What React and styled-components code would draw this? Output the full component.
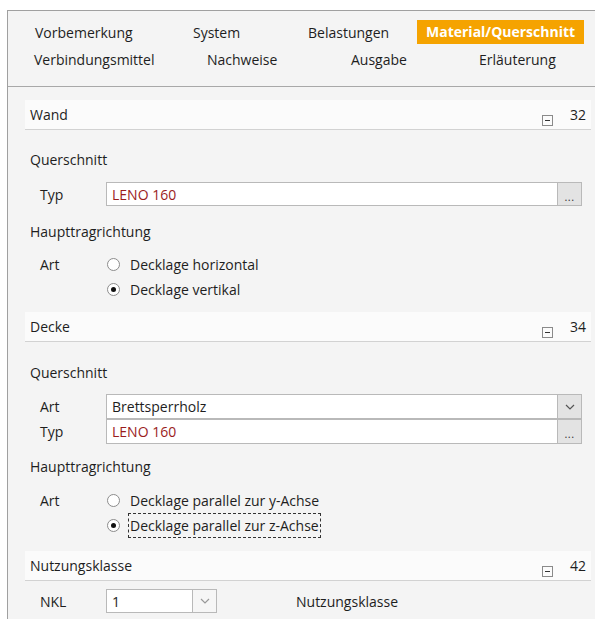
import styled, { createGlobalStyle } from 'styled-components'

const GlobalStyle = createGlobalStyle`
    html, body {
        margin: 0;
        padding: 0;
        background: #ffffff;
    }
    body {
        font-family: "Open Sans", "Noto Sans", sans-serif;
        font-size: 14px;
        color: #1e1e1e;
    }
`

export const Frame = styled.div`
    margin: 10px 0 0 7px;
    min-height: 609px;
    border-left: 1px solid #a0a0a0;
    border-top: 1px solid #a0a0a0;
    background: #f4f4f4;
    box-sizing: border-box;
`

export const TabBar = styled.div`
    height: 76px;
    border-bottom: 1px solid #a8a8a8;
    box-sizing: border-box;
    padding-top: 8px;
`

export const TabRow = styled.div`
    display: flex;
    height: ${p => p.$h}px;
    align-items: center;
    padding-left: ${p => p.$pad}px;
`

export const Tab = styled.span`
    width: ${p => p.$w}px;
    box-sizing: border-box;
    white-space: nowrap;
`

export const ActiveTab = styled.span`
    background: #f5a300;
    color: #ffffff;
    font-weight: 700;
    padding: 3px 9px;
    line-height: 18px;
    margin-left: -2px;
`

export const Body = styled.div`
    padding: 13px 4px 0 17px;
`

export const SectionHead = styled.div`
    display: flex;
    align-items: center;
    height: 30px;
    margin-top: ${p => p.$top || 0}px;
    padding: 0 5px 0 5px;
    background: #fbfbfb;
    border-bottom: 1px solid #d2d2d2;
    box-sizing: border-box;
`

export const HeadTitle = styled.span`
    flex: 1;
`

export const Collapse = styled.span`
    width: 9px;
    height: 9px;
    border: 1px solid #8a8a8a;
    margin: 12px 17px 0 0;
    position: relative;
    &::after {
        content: '';
        position: absolute;
        left: 2px;
        right: 2px;
        top: 4px;
        height: 1px;
        background: #333;
    }
`

export const GroupTitle = styled.div`
    height: 24px;
    line-height: 24px;
    margin-top: ${p => p.$top}px;
    padding-left: 5px;
`

export const FieldRow = styled.div`
    display: flex;
    align-items: center;
    height: ${p => p.$h || 24}px;
    margin-top: ${p => p.$top || 0}px;
`

export const Label = styled.span`
    width: 81px;
    padding-left: 15px;
    box-sizing: border-box;
`

export const InputBox = styled.div`
    display: flex;
    width: ${p => p.$w || 476}px;
    height: 100%;
    border: 1px solid #b9b9b9;
    margin-top: ${p => (p.$joined ? -1 : 0)}px;
    box-sizing: border-box;
    background: #ffffff;
`

export const InputText = styled.span`
    flex: 1;
    padding-left: 5px;
    display: flex;
    align-items: center;
    color: ${p => (p.$red ? '#9a1c1c' : '#1e1e1e')};
`

export const SideButton = styled.span`
    width: 23px;
    border-left: 1px solid #b9b9b9;
    background: ${p => (p.$light ? '#f6f6f6' : '#e3e3e3')};
    display: flex;
    align-items: center;
    justify-content: center;
    color: #333;
`

export const Dots = styled.span`
    font-size: 11px;
    letter-spacing: 0.5px;
    margin-top: 4px;
`

export const Radio = styled.span`
    width: 13px;
    height: 13px;
    border-radius: 50%;
    border: 1px solid #8c8c8c;
    background: #ffffff;
    box-sizing: border-box;
    margin: 0 8px 0 1px;
    display: flex;
    align-items: center;
    justify-content: center;
    &::after {
        content: '';
        width: 5px;
        height: 5px;
        border-radius: 50%;
        background: ${p => (p.$on ? '#111' : 'transparent')};
    }
`

export const RadioText = styled.span`
    padding: 2px 1px;
    border: 1px dashed ${p => (p.$focus ? '#333' : 'transparent')};
`

export const Caption = styled.span`
    margin-left: 79px;
`

const Chevron = ({ color = '#555' }) => (
    <svg width="10" height="6" viewBox="0 0 10 6">
        <path d="M1 1 L5 5 L9 1" fill="none" stroke={color} strokeWidth="1.2" />
    </svg>
)

function Section({ title, num, top }) {
    return (
        <SectionHead $top={top}>
            <HeadTitle>{title}</HeadTitle>
            <Collapse />
            <span>{num}</span>
        </SectionHead>
    )
}

function RadioRow({ label, text, on, focus, top }) {
    return (
        <FieldRow $h={25} $top={top}>
            <Label>{label}</Label>
            <Radio $on={on} />
            <RadioText $focus={focus}>{text}</RadioText>
        </FieldRow>
    )
}

export default function App() {
    return (
        <>
            <GlobalStyle />
            <Frame>
                <TabBar>
                    <TabRow $pad={27} $h={26}>
                        <Tab $w={158}>Vorbemerkung</Tab>
                        <Tab $w={115}>System</Tab>
                        <Tab $w={111}>Belastungen</Tab>
                        <ActiveTab>Material/Querschnitt</ActiveTab>
                    </TabRow>
                    <TabRow $pad={26} $h={28}>
                        <Tab $w={173}>Verbindungsmittel</Tab>
                        <Tab $w={144}>Nachweise</Tab>
                        <Tab $w={128}>Ausgabe</Tab>
                        <Tab>Erläuterung</Tab>
                    </TabRow>
                </TabBar>

                <Body>
                    <Section title="Wand" num="32" />
                    <GroupTitle $top={18}>Querschnitt</GroupTitle>
                    <FieldRow $top={10}>
                        <Label>Typ</Label>
                        <InputBox>
                            <InputText $red>LENO 160</InputText>
                            <SideButton><Dots>...</Dots></SideButton>
                        </InputBox>
                    </FieldRow>
                    <GroupTitle $top={14}>Haupttragrichtung</GroupTitle>
                    <RadioRow top={8} label="Art" text="Decklage horizontal" />
                    <RadioRow text="Decklage vertikal" on />

                    <Section title="Decke" num="34" top={10} />
                    <GroupTitle $top={19}>Querschnitt</GroupTitle>
                    <FieldRow $h={25} $top={9}>
                        <Label>Art</Label>
                        <InputBox>
                            <InputText>Brettsperrholz</InputText>
                            <SideButton><Chevron /></SideButton>
                        </InputBox>
                    </FieldRow>
                    <FieldRow $h={25}>
                        <Label>Typ</Label>
                        <InputBox $joined>
                            <InputText $red>LENO 160</InputText>
                            <SideButton><Dots>...</Dots></SideButton>
                        </InputBox>
                    </FieldRow>
                    <GroupTitle $top={11}>Haupttragrichtung</GroupTitle>
                    <RadioRow top={9} label="Art" text="Decklage parallel zur y-Achse" />
                    <RadioRow text="Decklage parallel zur z-Achse" on focus />

                    <Section title="Nutzungsklasse" num="42" top={13} />
                    <FieldRow $top={8}>
                        <Label>NKL</Label>
                        <InputBox $w={111}>
                            <InputText>1</InputText>
                            <SideButton $light><Chevron color="#999" /></SideButton>
                        </InputBox>
                        <Caption>Nutzungsklasse</Caption>
                    </FieldRow>
                </Body>
            </Frame>
        </>
    )
}
